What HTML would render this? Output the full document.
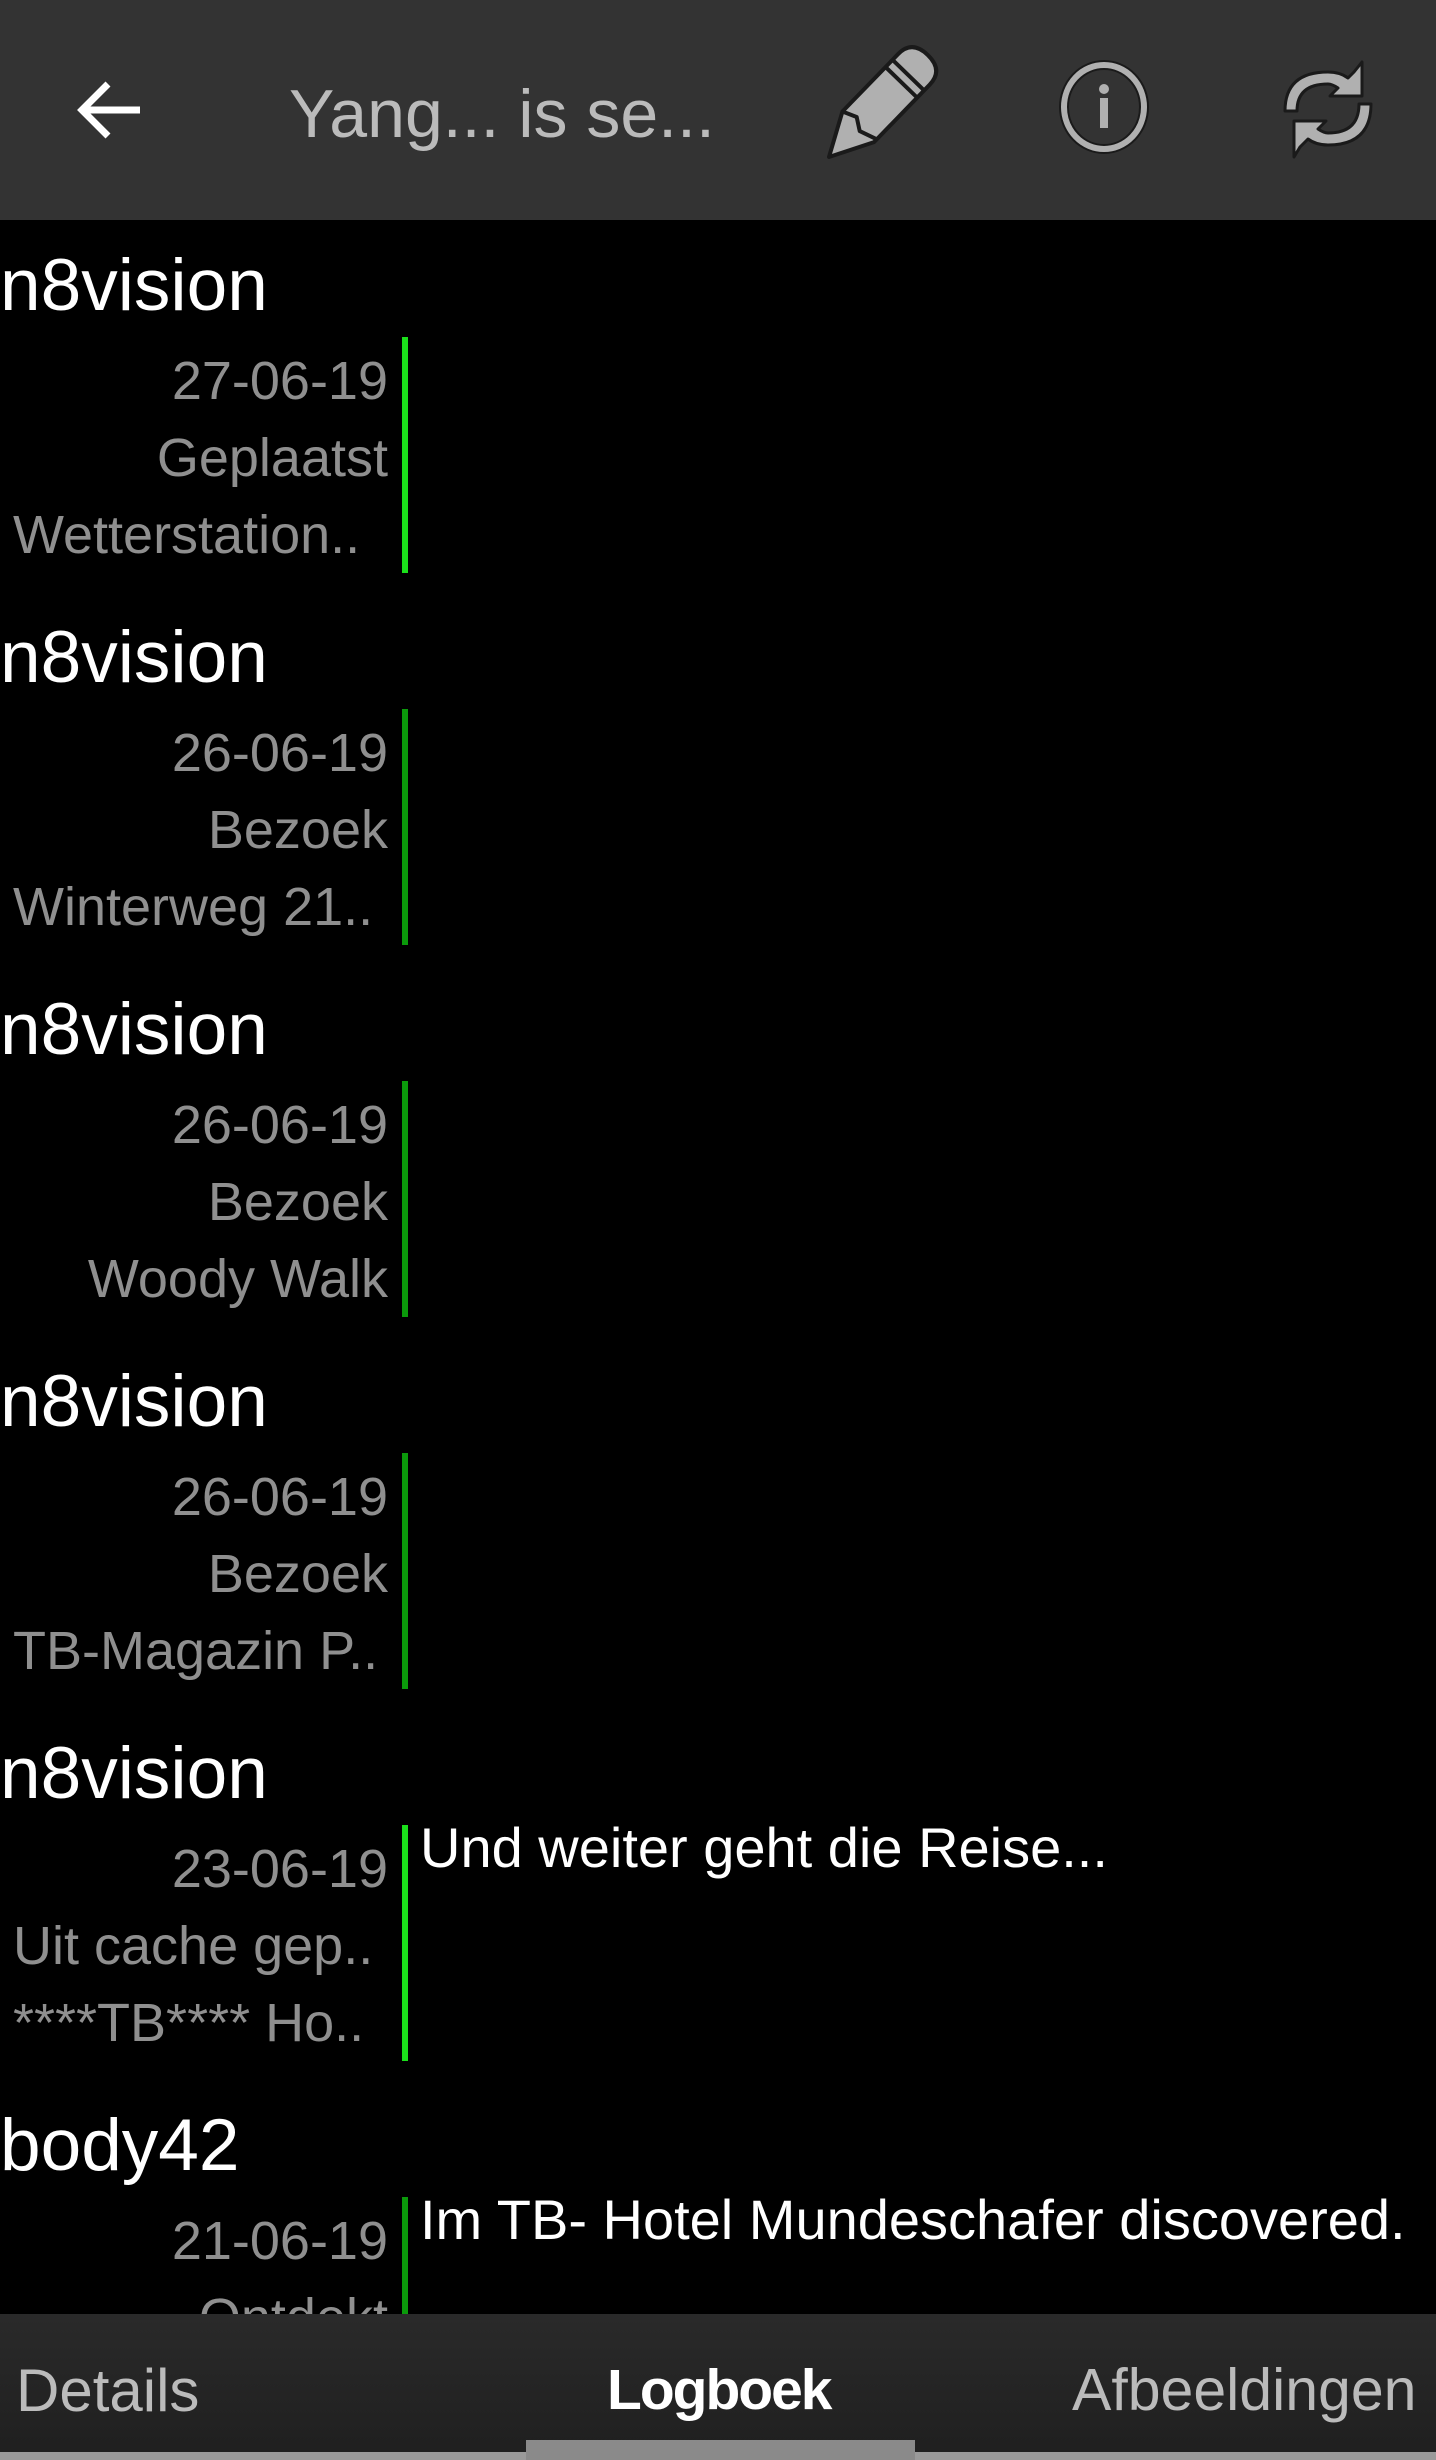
<!DOCTYPE html>
<html><head><meta charset="utf-8"><style>
*{margin:0;padding:0;box-sizing:border-box}
body{width:1436px;height:2460px;background:#000;position:relative;overflow:hidden;font-family:"Liberation Sans",sans-serif}
.t{position:absolute;line-height:1;white-space:nowrap}
.n{font-size:73px;color:#fff;left:0}
.g{font-size:54px;color:#8f8f8f}
.r{right:1048px;text-align:right}
.l{left:13px}
.bar{position:absolute;left:402px;width:6px;height:236px}
.m{font-size:56px;color:#fff;left:420px}
</style></head><body>
<div style="position:absolute;left:0;top:0;width:1436px;height:220px;background:#333"></div>
<svg style="position:absolute;left:0;top:0" width="1436" height="220">
<path d="M140 110H84M108 84L82 110L108 136" stroke="#fff" stroke-width="7" fill="none"/>
<g transform="translate(829,157) rotate(-45.9)" stroke="#1a1a1a" stroke-width="4" fill="#b0b0b0" stroke-linejoin="round">
<path d="M0 0L42 -22H122Q142 -22 142 0Q142 22 122 22H42Z"/>
<path d="M42 -22L48 -8L40 4L46 22" fill="none"/>
<path d="M104 -22V22M114 -22V22" fill="none"/>
</g>
<ellipse cx="1104" cy="107" rx="40" ry="42" fill="none" stroke="#1a1a1a" stroke-width="10"/>
<ellipse cx="1104" cy="107" rx="40" ry="42" fill="none" stroke="#b0b0b0" stroke-width="6"/>
<circle cx="1104" cy="89" r="5" fill="#b0b0b0"/>
<rect x="1100" y="98" width="8" height="30" fill="#b0b0b0"/>
<g stroke="#1a1a1a" stroke-width="3" fill="#b0b0b0" stroke-linejoin="round">
<path d="M1285 111Q1285 72 1328 72Q1340 72 1348 78L1354 72L1362 62V96H1330L1338 88Q1332 84 1328 84Q1297 84 1297 111Z"/>
<path d="M1371 104Q1371 145 1328 145Q1316 145 1308 139L1300 147L1294 157V121H1326L1318 129Q1324 133 1328 133Q1359 133 1359 104Z"/>
</g>
</svg>
<div class="t" style="left:289px;top:80px;font-size:68px;color:#bbb">Yang... is se...</div>

<div class="t n" style="top:249px">n8vision</div>
<div class="bar" style="top:337px;background:#1be01b"></div>
<div class="t g r" style="top:354px">27-06-19</div>
<div class="t g r" style="top:431px">Geplaatst</div>
<div class="t g l" style="top:508px">Wetterstation..</div>

<div class="t n" style="top:621px">n8vision</div>
<div class="bar" style="top:709px;background:#0b9a0b"></div>
<div class="t g r" style="top:726px">26-06-19</div>
<div class="t g r" style="top:803px">Bezoek</div>
<div class="t g l" style="top:880px">Winterweg 21..</div>

<div class="t n" style="top:993px">n8vision</div>
<div class="bar" style="top:1081px;background:#0b9a0b"></div>
<div class="t g r" style="top:1098px">26-06-19</div>
<div class="t g r" style="top:1175px">Bezoek</div>
<div class="t g r" style="top:1252px">Woody Walk</div>

<div class="t n" style="top:1365px">n8vision</div>
<div class="bar" style="top:1453px;background:#0b9a0b"></div>
<div class="t g r" style="top:1470px">26-06-19</div>
<div class="t g r" style="top:1547px">Bezoek</div>
<div class="t g l" style="top:1624px">TB-Magazin P..</div>

<div class="t n" style="top:1737px">n8vision</div>
<div class="bar" style="top:1825px;background:#1be01b"></div>
<div class="t g r" style="top:1842px">23-06-19</div>
<div class="t g l" style="top:1919px">Uit cache gep..</div>
<div class="t g l" style="top:1996px">****TB**** Ho..</div>
<div class="t m" style="top:1820px">Und weiter geht die Reise...</div>

<div class="t n" style="top:2109px">body42</div>
<div class="bar" style="top:2197px;background:#0b9a0b"></div>
<div class="t g r" style="top:2214px">21-06-19</div>
<div class="t g r" style="top:2291px">Ontdekt</div>
<div class="t m" style="top:2192px">Im TB- Hotel Mundeschafer discovered.</div>

<div style="position:absolute;left:0;top:2314px;width:1436px;height:146px;background:linear-gradient(#2a2a2a,#1f1f1f)"></div>
<div style="position:absolute;left:0;top:2452px;width:1436px;height:8px;background:#9a9a9a"></div>
<div style="position:absolute;left:526px;top:2440px;width:389px;height:20px;background:#8a8a8a"></div>
<div class="t" style="left:16px;top:2361px;font-size:60px;color:#bbb">Details</div>
<div class="t" style="left:607px;top:2362px;font-size:57px;color:#fff;font-weight:bold;letter-spacing:-2px">Logboek</div>
<div class="t" style="left:1072px;top:2361px;font-size:59px;color:#bbb">Afbeeldingen</div>
</body></html>
